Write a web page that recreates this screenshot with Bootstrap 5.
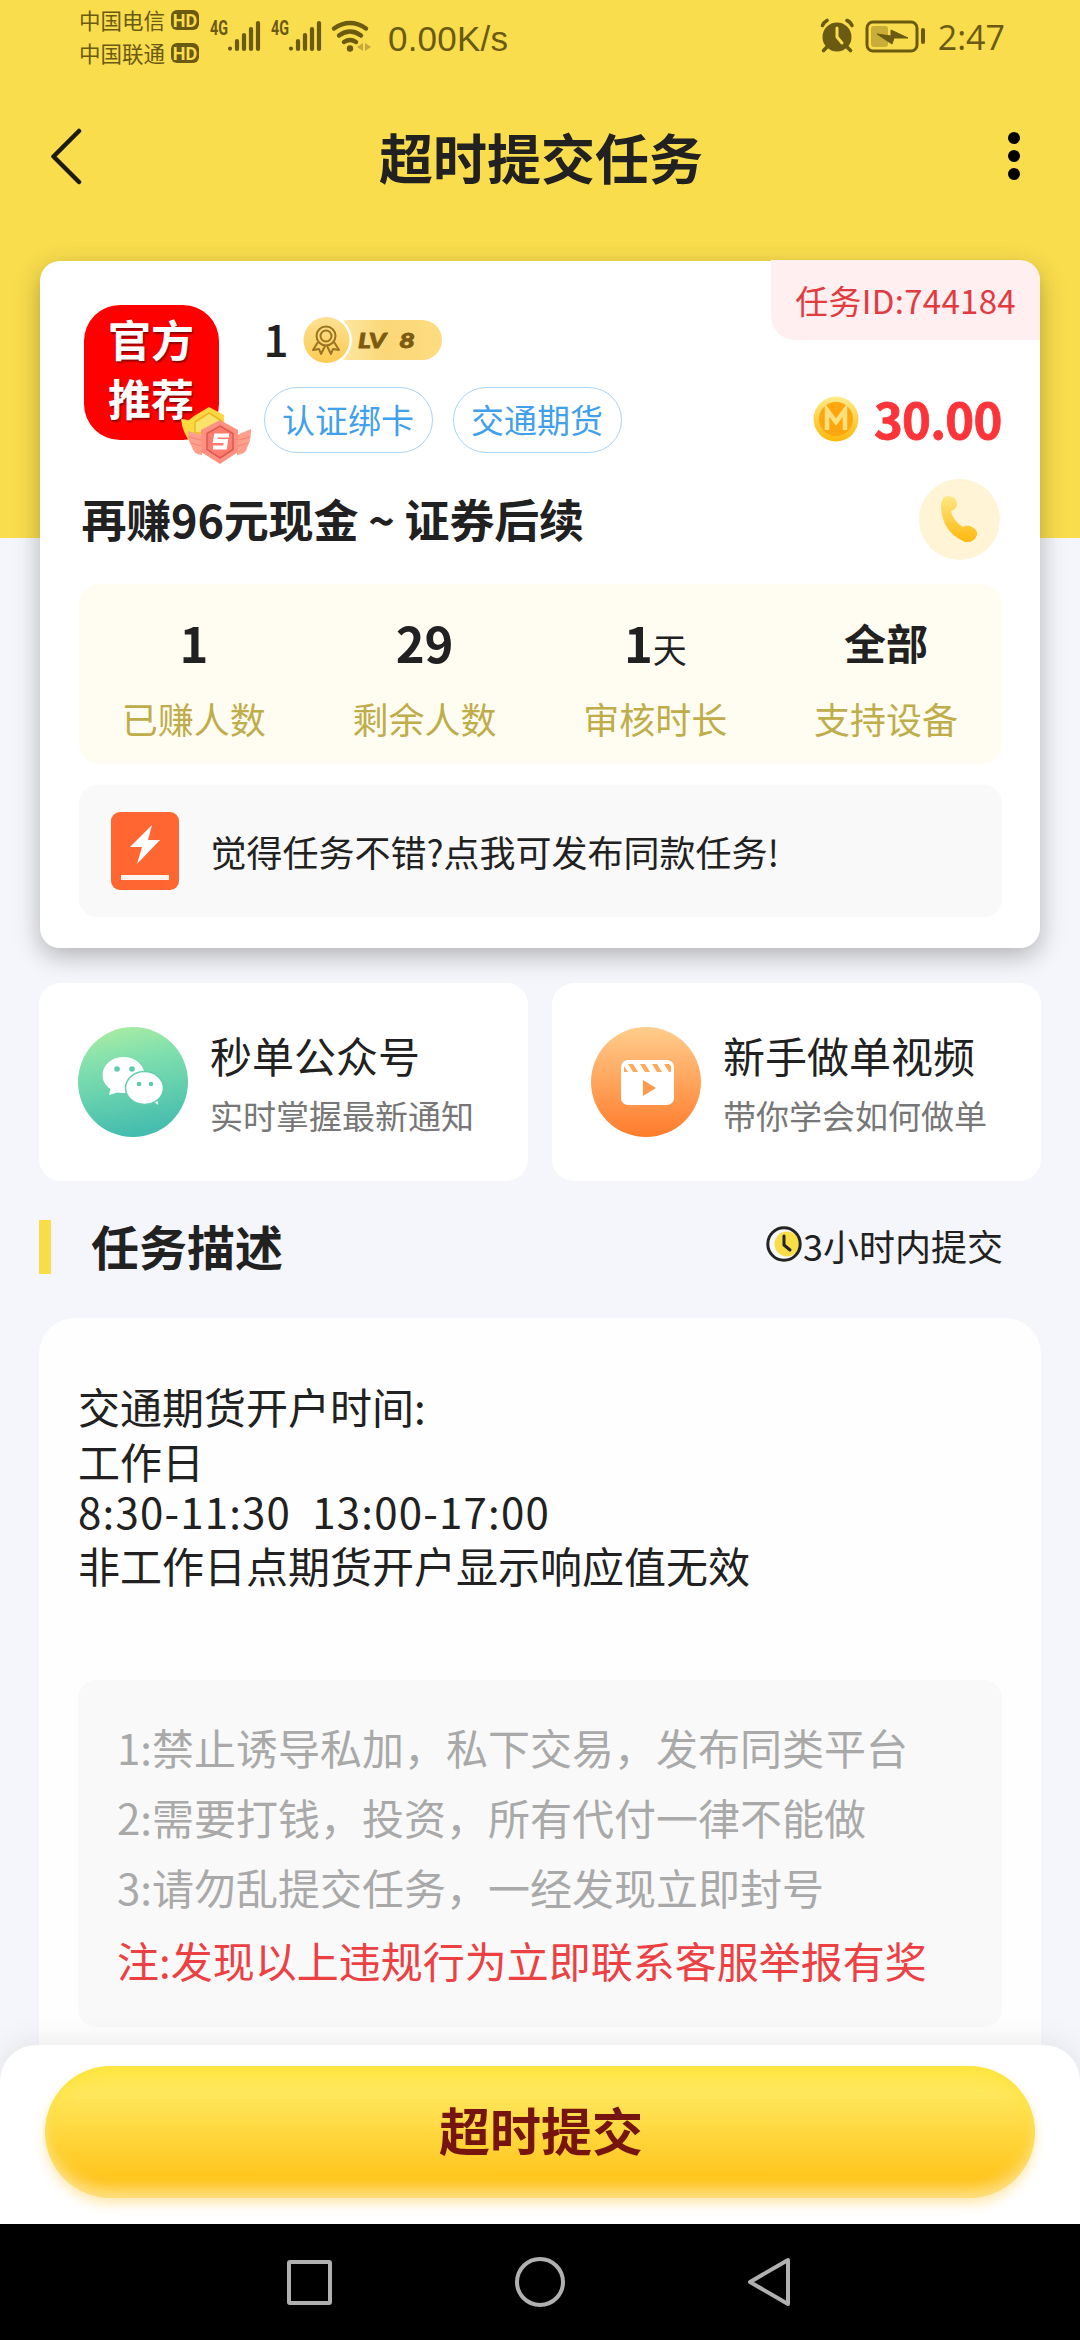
<!DOCTYPE html>
<html lang="zh-CN">
<head>
<meta charset="utf-8">
<meta name="viewport" content="width=device-width, initial-scale=1">
<title>超时提交任务</title>
<link href="https://cdn.jsdelivr.net/npm/bootstrap@5.3.0/dist/css/bootstrap.min.css" rel="stylesheet">
<style>
body{width:1080px;height:2340px;overflow:hidden;background:#f5f6fb;color:#212121;font-family:"Noto Sans CJK SC",sans-serif;line-height:1}
svg{display:block;flex:none}
.hero{height:538px;background:#fadd4d}
.status{height:72px;padding:0 76px 0 79px;color:#6a5a12}
.carrier{font-size:21.5px;line-height:33px;padding-bottom:1px;width:86px;white-space:nowrap}
.hdtag{width:28px;height:20px;border-radius:6px;background:#6a5a12}
.speed{font-family:"Liberation Sans",sans-serif;font-size:35px;letter-spacing:.2px}
.clocktxt{font-family:"Open Sans",sans-serif;font-size:34px}
.topbar{height:172px;padding:0 60px 0 48px}
.topbar h1{font-size:54px;font-weight:700;line-height:60px;padding:0 10px 3px 0}
.page-main{margin-top:-277px;padding:0 39px}
.taskcard{height:687px;margin:0 1px;background:#fff;border-radius:20px;box-shadow:0 8px 26px rgba(0,0,0,.28);padding:44px 38.5px 0}
.idtag{top:-1px;right:0;width:269px;height:80px;background:#ffeff0;color:#e23b3f;border-radius:0 20px 0 24px;font-size:33px;letter-spacing:.3px}
.avatar{width:135px;height:135px;border-radius:36px;background:#fe0000;color:#fff;font-size:43px;font-weight:700;line-height:59px;padding-top:4px;margin-left:5px;text-shadow:1px 2px 2px rgba(90,0,0,.7)}
.medal{left:96px;top:101px}
.uname{font-size:44px;font-weight:500;line-height:50px;width:39px;margin-top:-4px}
.pill{height:66px;width:169px;border:1.5px solid #abd3f3;border-radius:33px;color:#41a0ec;font-size:33px;padding-bottom:2px}
.price{color:#fb3439;font-size:49px;font-weight:700;line-height:50px;letter-spacing:-.8px;-webkit-text-stroke:.8px #fb3439}
.ttl{font-size:45px;font-weight:700;white-space:nowrap;letter-spacing:-.2px;padding-bottom:2px}
.phone{width:81px;height:81px;background:#fff4d6}
.stats{height:180px;background:#fffdf1;border-radius:20px}
.stats .num{height:60px;font-size:49px;font-weight:700;line-height:60px}
.stats .lab{font-size:36px;color:#bfac4a;line-height:40px;margin-top:26px}
.notice{height:132px;margin-top:21px;background:#f9f9f9;border-radius:18px;padding:0 32px;font-size:36px}
.linkcard{width:489px;height:198px;background:#fff;border-radius:22px;padding-left:39px}
.linkcard b{font-size:42px;font-weight:400;line-height:50px}
.linkcard span{font-size:33px;color:#777;line-height:40px;margin-top:15px}
.roundicon{width:110px;height:110px}
.sect{height:54px;margin-top:39px}
.sect .bar{width:12px;height:54px;background:#f9dc4a}
.sect h2{font-size:48px;font-weight:700;margin:0 0 2px 40px}
.desc{height:800px;margin-top:44px;background:#fefefe;border-radius:36px;padding:60px 39px 0}
.desc p{font-size:42px;margin:0;white-space:pre;color:#212121}
.rules{height:347px;background:#f9f9f9;border-radius:18px;padding:32px 39px 0;margin-top:85px;font-size:42px;line-height:70px;color:#a9a9a9;white-space:nowrap}
.botbar{left:0;right:0;bottom:116px;height:179px;background:#fff;border-radius:36px 36px 0 0;padding:21px 45px 0;box-shadow:0 -4px 30px rgba(0,0,0,.08)}
.submit{height:132px;width:990px;border-radius:66px;border:0;background:linear-gradient(#ffe94a 0,#ffe75c 20%,#ffc51c 86%,#ffc41c 100%);box-shadow:inset 0 -12px 14px -3px rgba(255,232,170,.75),inset 0 6px 14px rgba(250,225,40,.45),0 6px 12px rgba(255,200,60,.4);color:#76140f;font-size:51px;font-weight:700;padding:0 0 6px 2px}
.sysnav{left:0;right:0;bottom:0;height:116px;background:#000}
</style>
</head>
<body class="position-relative">
<div class="hero">
  <div class="status d-flex align-items-center">
    <div class="carrier">中国电信<br>中国联通</div>
    <div class="d-flex flex-column" style="gap:13px;margin-left:6px">
      <svg class="hdtag" viewBox="0 0 28 20"><text x="14" y="16.5" text-anchor="middle" font-family="Roboto" font-weight="700" font-size="18" fill="#fadd4d">HD</text></svg>
      <svg class="hdtag" viewBox="0 0 28 20"><text x="14" y="16.5" text-anchor="middle" font-family="Roboto" font-weight="700" font-size="18" fill="#fadd4d">HD</text></svg>
    </div>
    <svg width="172" height="72" viewBox="0 0 172 72" fill="none" stroke="#6a5a12" stroke-linecap="round" style="margin-left:8px">
      <g font-family="Roboto" font-weight="700" font-size="20" fill="#6a5a12" stroke="none"><text x="3" y="34.500" textLength="18" lengthAdjust="spacingAndGlyphs">4G</text><text x="64" y="34.500" textLength="18" lengthAdjust="spacingAndGlyphs">4G</text></g>
      <path stroke-width="4.200" d="M23 48.500v.1M30 41v8M37 35v14M44 29v20M51 23v26M84 48.500v.1M91 41v8M98 35v14M105 29v20M112 23v26"/>
      <g stroke-width="4.500"><path d="M127 28.500q16-11 32 0M132 35.500q11-8 22 0M137 42q6-4 12 0"/></g>
      <circle cx="143" cy="48.500" r="3.200" fill="#6a5a12" stroke="none"/>
      <path fill="#c4a83a" stroke="none" d="M156 43v8l-6-4zM158 43v8l6-4z"/>
    </svg>
    <div class="speed" style="width:125px;margin-left:9px;margin-top:5px">0.00K/s</div>
    <svg class="ms-auto" width="106" height="40" viewBox="0 0 106 40">
      <circle cx="17" cy="21" r="14.500" fill="#6a5a12"/><path d="M2.500 9.500q1-3 4.500-5M27 4.500q3 1 5 5M6.500 31.500l-3 3M27.500 31.500l3 3" stroke="#6a5a12" stroke-width="3.600" fill="none" stroke-linecap="round"/><path d="M17 12v9l5 6" stroke="#fadd4d" stroke-width="3" fill="none" stroke-linecap="round"/>
      <rect x="47" y="6" width="50" height="29" rx="6" fill="none" stroke="#6a5a12" stroke-width="3"/><rect x="51" y="10" width="17" height="21" rx="3" fill="#c8ad38"/>
      <path d="M57 18l14 2 0-6 17 8-14 0-2 6z" fill="#6a5a12" stroke="#6a5a12"/><path d="M103 14v12" stroke="#6a5a12" stroke-width="4" stroke-linecap="round"/>
    </svg>
    <div class="clocktxt" style="margin-left:12px;margin-right:-1px;margin-top:2px">2:47</div>
  </div>
  <div class="topbar d-flex align-items-center justify-content-between">
    <svg width="36" height="60" viewBox="0 0 36 60" fill="none" stroke="#1d1b10" stroke-width="4.500" stroke-linecap="round" stroke-linejoin="round"><path d="M31 3L5.500 28.500 31 54"/></svg>
    <h1 class="m-0">超时提交任务</h1>
    <svg width="12" height="52" viewBox="0 0 12 52"><circle cx="6" cy="6" r="6"/><circle cx="6" cy="24" r="6"/><circle cx="6" cy="42" r="6"/></svg>
  </div>
</div>

<main class="page-main position-relative">
  <section class="taskcard position-relative">
    <div class="idtag position-absolute d-flex align-items-center justify-content-center">任务ID:744184</div>
    <div class="d-flex">
      <div class="avatar position-relative text-center">官方<br>推荐
        <svg class="medal position-absolute" width="72" height="60" viewBox="0 0 72 60">
          <path d="M1 13l8 1 5-4L29 1l15 8v20l-22 8-10 2Q2 26 1 13z" fill="#ffd83f"/><path d="M29 7l13 8v12H15V16z" fill="#fbe36a" stroke="#e8b92a" stroke-width="1.500"/>
          <path d="M8 25l14 4v20q-9-1-10-8l-3-6q-1-4-1-10zM71 23l-14 6v20q9-1 10-7l3-7q1-5 1-12z" fill="#ff9f8c"/><path d="M9 31l12 3M11 37l10 3M70 31l-12 3M68 37l-10 3" stroke="#f98272" stroke-width="1"/>
          <path d="M40 14l18 10v22L40 58 21 46V24z" fill="#ff9183"/><path d="M40 20l13 7.500v16L40 52l-13-8.500v-16z" fill="#ff7c70" stroke="#dd5a50" stroke-width="1.500"/>
          <path d="M49 29.500H36l-1 5.500h11l-1 6.500H33" fill="none" stroke="#fff" stroke-width="4"/>
        </svg>
      </div>
      <div style="margin-left:45px">
        <div class="d-flex align-items-center" style="height:70px">
          <div class="uname">1</div>
          <svg width="140" height="50" viewBox="0 0 140 50">
            <defs><linearGradient id="lv" x2="1"><stop stop-color="#fdeaa8"/><stop offset=".3" stop-color="#fbe08e"/><stop offset=".5" stop-color="#fbd777"/><stop offset="1" stop-color="#fddc80"/></linearGradient><linearGradient id="lc" x2="0" y2="1"><stop stop-color="#fde093"/><stop offset="1" stop-color="#fccb52"/></linearGradient></defs>
            <rect x="25" y="5" width="114" height="40" rx="20" fill="url(#lv)"/><circle cx="24" cy="25" r="25" fill="#fff"/><circle cx="23.500" cy="25" r="23" fill="url(#lc)"/>
            <g fill="none" stroke="#9a7420" stroke-width="2" stroke-linejoin="round"><circle cx="23" cy="21" r="9.500"/><circle cx="23" cy="21" r="5.500"/><path d="M15 27l-5 8 6-1 2 5 4-8M31 27l5 8-6-1-2 5-4-8"/></g>
            <g font-family="Lato" font-style="italic" font-weight="900" font-size="21.500" fill="#7c5a10" stroke="#7c5a10" stroke-width=".8"><text x="55" y="32.500" textLength="28" lengthAdjust="spacingAndGlyphs">LV</text><text x="96" y="32.500" textLength="16" lengthAdjust="spacingAndGlyphs">8</text></g>
          </svg>
        </div>
        <div class="d-flex" style="gap:20px;margin-top:12px"><span class="pill d-flex align-items-center justify-content-center">认证绑卡</span><span class="pill d-flex align-items-center justify-content-center">交通期货</span></div>
      </div>
      <div class="price d-flex align-items-center ms-auto" style="margin-top:88px;height:50px">
        <svg width="46" height="46" viewBox="0 0 46 46" style="margin-right:15px;margin-top:2px"><defs><linearGradient id="c1" x2="0" y2="1"><stop stop-color="#ffec8a"/><stop offset="1" stop-color="#fdb70a"/></linearGradient></defs><circle cx="23" cy="23" r="22.500" fill="url(#c1)"/><circle cx="23" cy="23" r="17" fill="#fea60f"/><path d="M14 34V14l9 12 9-12v20" fill="none" stroke="#ffe07c" stroke-width="4.500"/></svg>30.00</div>
    </div>
    <div class="d-flex align-items-center justify-content-between" style="height:82px;margin:25px 2px 24px 3px">
      <div class="ttl">再赚96元现金 ~ 证券后续</div>
      <div class="phone rounded-circle d-flex align-items-center justify-content-center"><svg width="40" height="48" viewBox="0 0 40 48"><defs><linearGradient id="ph" x2="0" y2="1"><stop stop-color="#ffe782"/><stop offset="1" stop-color="#fdb80d"/></linearGradient></defs><path d="M2 12Q2 2 9 1q8 0 9 8 0 5-6 7 2 10 12 16 4-3 9 0 6 3 5 8-3 8-12 7Q3 37 2 12z" fill="url(#ph)"/></svg></div>
    </div>
    <div class="stats d-flex text-center" style="padding-top:28px">
      <div class="col-3"><div class="num">1</div><div class="lab">已赚人数</div></div>
      <div class="col-3"><div class="num">29</div><div class="lab">剩余人数</div></div>
      <div class="col-3"><div class="num">1<span style="font-size:34px;font-weight:400">天</span></div><div class="lab">审核时长</div></div>
      <div class="col-3"><div class="num" style="font-size:42px">全部</div><div class="lab">支持设备</div></div>
    </div>
    <div class="notice d-flex align-items-center">
      <svg width="68" height="78" viewBox="0 0 68 78" style="margin-right:32px"><rect width="68" height="78" rx="9" fill="#ff6632"/><path d="M41 13L19 35h12l-5 17 23-24H37z" fill="#fff"/><path d="M10 65.500h48" stroke="#fff3ee" stroke-width="5"/></svg>
      <span>觉得任务不错?点我可发布同款任务!</span>
    </div>
  </section>

  <section class="d-flex justify-content-between" style="margin-top:35px">
    <div class="linkcard d-flex align-items-center">
      <svg class="roundicon" viewBox="0 0 110 110"><defs><linearGradient id="g1" x1=".4" x2=".6" y2="1"><stop stop-color="#a6eba4"/><stop offset=".3" stop-color="#7fdfae"/><stop offset="1" stop-color="#41baae"/></linearGradient></defs><circle cx="55" cy="55" r="55" fill="url(#g1)"/><path d="M33 60l-2 8 10-3zM74 73l6 5-1-9z" fill="#fff"/><ellipse cx="45.500" cy="48" rx="21" ry="18" fill="#fff"/><ellipse cx="66.500" cy="61" rx="19" ry="16.500" fill="#fff" stroke="#62ceae" stroke-width="1.500"/><g fill="#5fcbae"><circle cx="39" cy="42" r="2.800"/><circle cx="54" cy="42" r="2.800"/><circle cx="61" cy="57" r="2.300"/><circle cx="73" cy="57" r="2.300"/></g></svg>
      <div class="d-flex flex-column" style="margin-left:22px"><b>秒单公众号</b><span>实时掌握最新通知</span></div>
    </div>
    <div class="linkcard d-flex align-items-center">
      <svg class="roundicon" viewBox="0 0 110 110"><defs><linearGradient id="g2" x2="0" y2="1"><stop stop-color="#ffcd8c"/><stop offset="1" stop-color="#ff7b2c"/></linearGradient></defs><circle cx="55" cy="55" r="55" fill="url(#g2)"/><rect x="30" y="33" width="53" height="45" rx="7" fill="#fff"/><path d="M33 39v6h4zM37 37h5l5 8h-5zM49 37h5l5 8h-5zM61 37h5l5 8h-5zM73 37h5l2 2v6h-2z" fill="#ffa95a"/><path d="M52 53l13 8-13 8z" fill="#ff9a4a"/></svg>
      <div class="d-flex flex-column" style="margin-left:22px"><b>新手做单视频</b><span>带你学会如何做单</span></div>
    </div>
  </section>

  <section class="sect d-flex align-items-center">
    <div class="bar"></div><h2>任务描述</h2>
    <svg class="ms-auto" width="36" height="36" viewBox="0 0 36 36" style="margin-bottom:6px"><circle cx="18" cy="18" r="16" fill="#f7f7f7"/><circle cx="21" cy="18" r="12.500" fill="#f9dd48"/><circle cx="18" cy="18" r="16.200" fill="none" stroke="#242424" stroke-width="3"/><path d="M18 10v9l6 5" fill="none" stroke="#242424" stroke-width="3" stroke-linecap="round"/></svg>
    <span style="font-size:36px;margin:0 38px 5px 1px">3小时内提交</span>
  </section>

  <section class="desc">
    <p style="line-height:56px">交通期货开户时间:</p>
    <p style="line-height:53px">工作日</p>
    <p style="line-height:47px;letter-spacing:1.2px">8:30-11:30  13:00-17:00</p>
    <p style="line-height:61px">非工作日点期货开户显示响应值无效</p>
    <div class="rules">
      <div>1:禁止诱导私加，私下交易，发布同类平台</div>
      <div>2:需要打钱，投资，所有代付一律不能做</div>
      <div>3:请勿乱提交任务，一经发现立即封号</div>
      <div style="color:#ec4043;line-height:75px">注:发现以上违规行为立即联系客服举报有奖</div>
    </div>
  </section>
</main>

<footer class="botbar position-absolute"><button class="submit">超时提交</button></footer>
<nav class="sysnav position-absolute d-flex align-items-center justify-content-center">
  <svg width="506" height="54" viewBox="0 0 506 54" fill="none" stroke="#b0b0b0" stroke-width="4" stroke-linejoin="round"><rect x="2" y="7" width="41" height="41" rx="1"/><circle cx="253" cy="27" r="23"/><path d="M501 5v44L463 27z"/></svg>
</nav>
<script src="https://cdn.jsdelivr.net/npm/bootstrap@5.3.0/dist/js/bootstrap.bundle.min.js"></script>
</body>
</html>
